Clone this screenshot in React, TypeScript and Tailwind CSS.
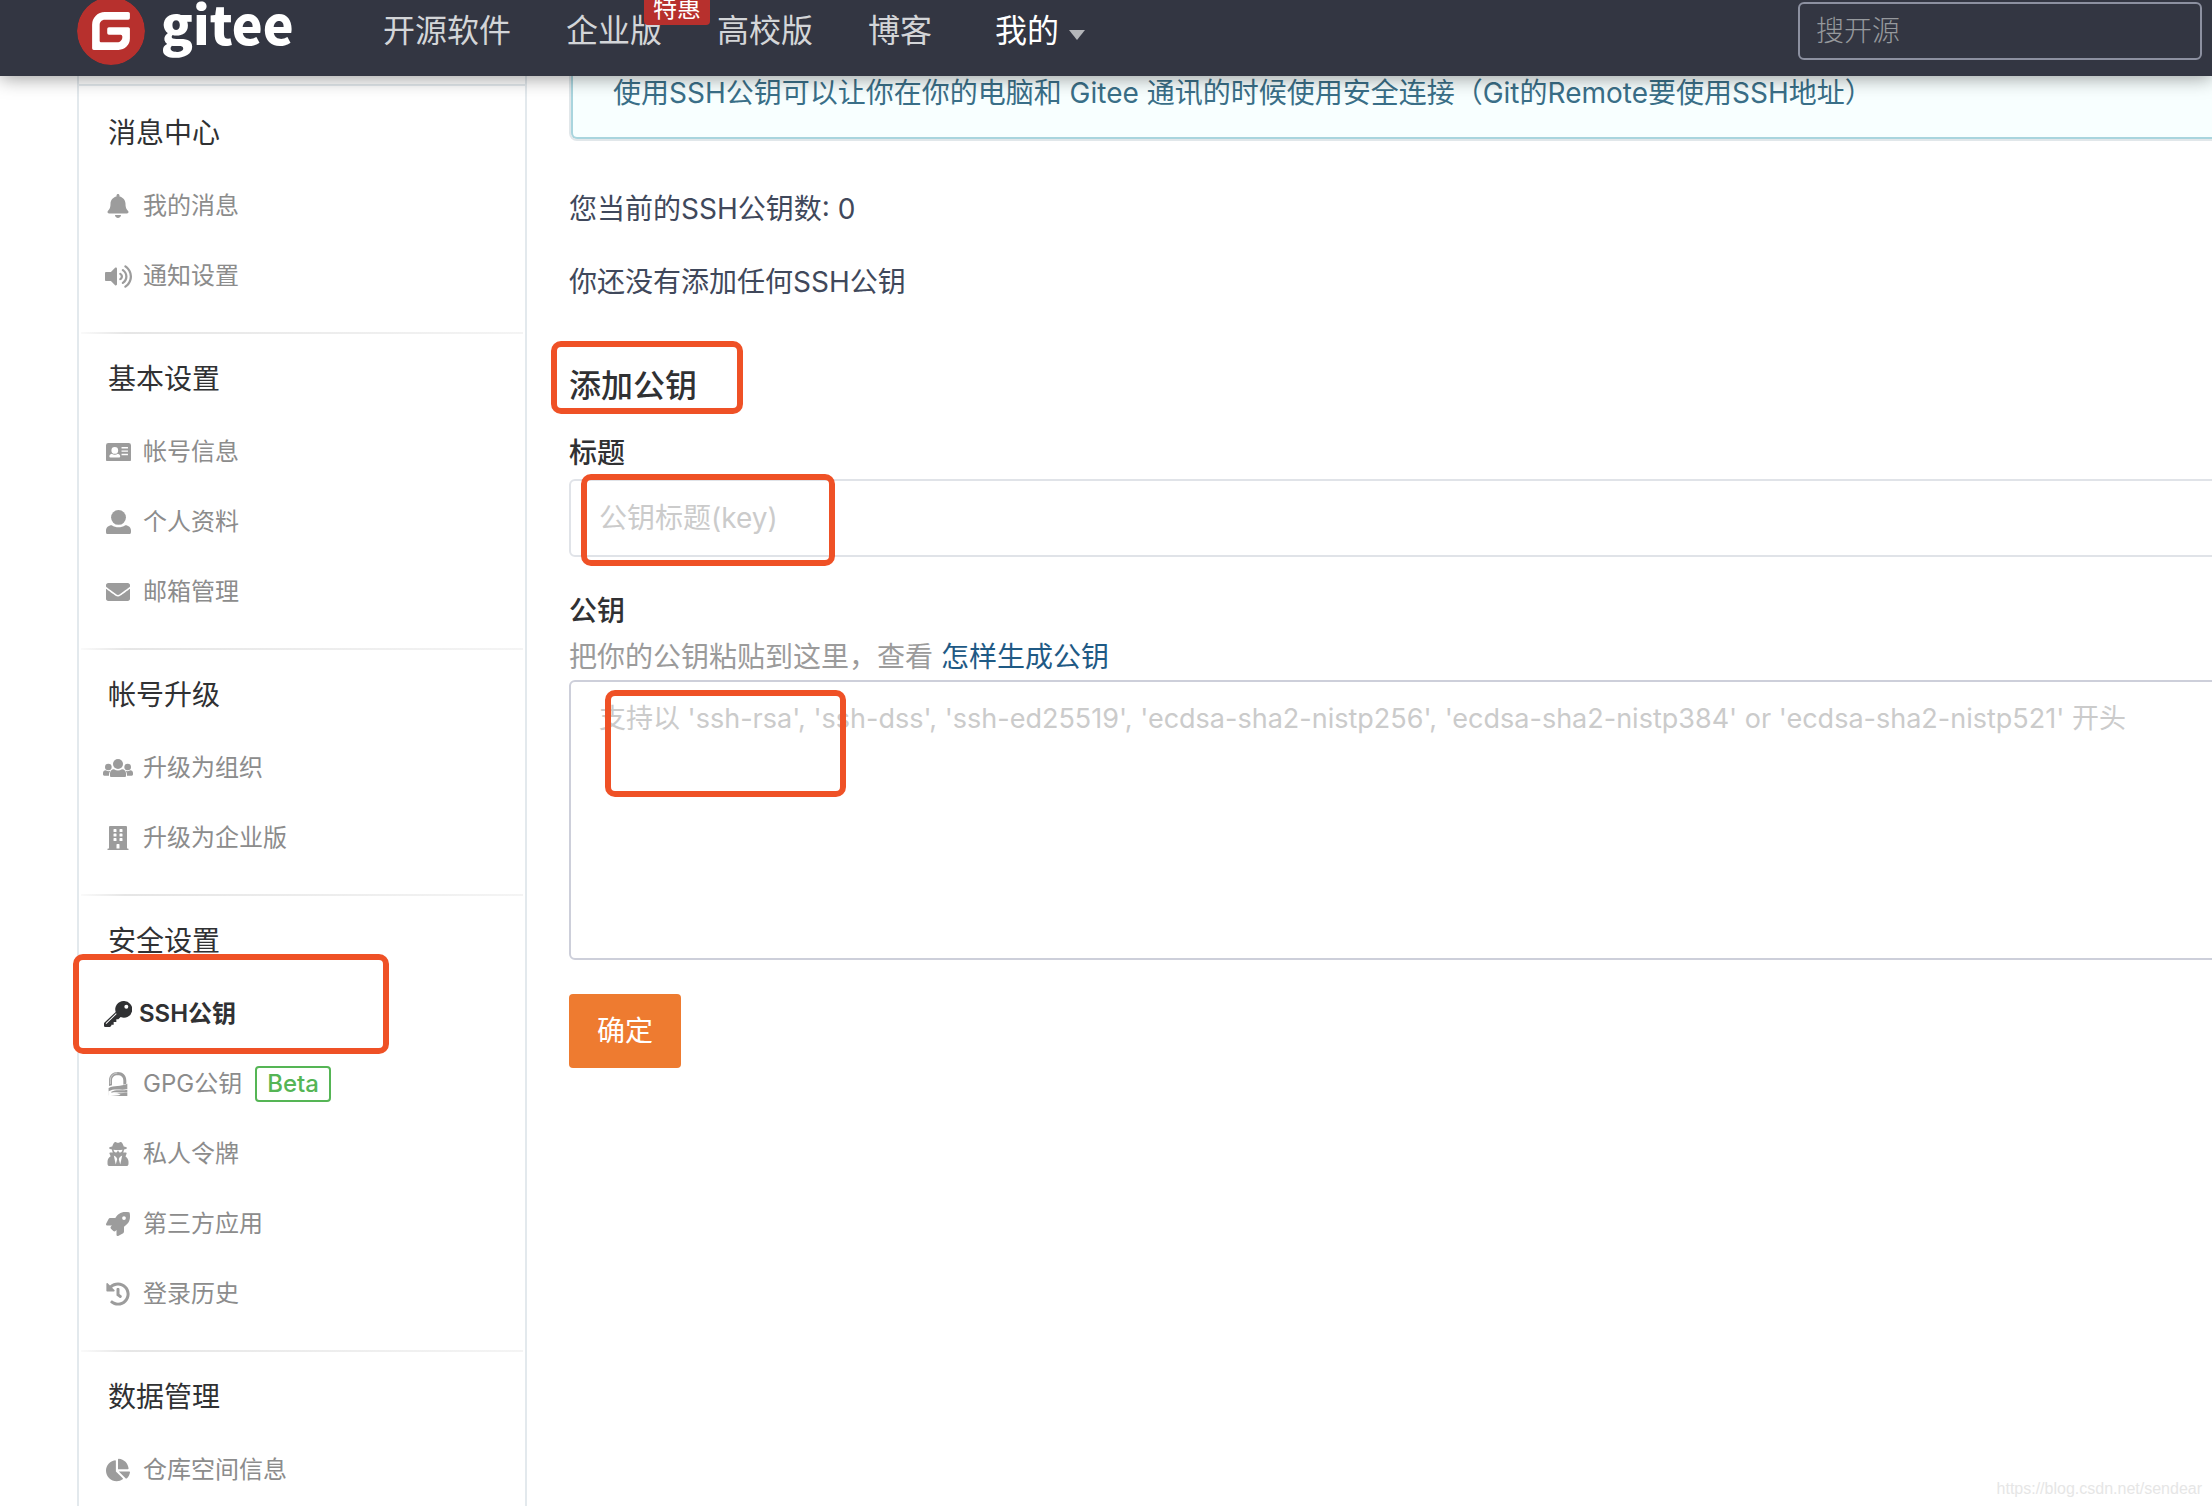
import { useState } from 'react';
import type { ReactNode } from 'react';
import {
  FaBell,
  FaBuilding,
  FaChartPie,
  FaEnvelope,
  FaHistory,
  FaRocket,
  FaUserSecret,
  FaVolumeUp,
} from 'react-icons/fa';
import { SiGitee } from 'react-icons/si';

interface MenuItem {
  label: string;
  icon: ReactNode;
  active?: boolean;
  beta?: boolean;
}

interface MenuGroup {
  title: string;
  items: MenuItem[];
}

function IdCardIcon() {
  return (
    <svg viewBox="0 0 74 56" className="w-[25px]" fill="currentColor">
      <path
        fillRule="evenodd"
        d="M7 0h60a7 7 0 0 1 7 7v42a7 7 0 0 1-7 7H7a7 7 0 0 1-7-7V7a7 7 0 0 1 7-7zM26 12a10 10 0 1 0 0 20a10 10 0 1 0 0-20zM17 32c-5 1-7 4-7 8c0 2 1 3 3 3h26c2 0 3-1 3-3c0-4-2-7-7-8c-5 4-13 4-18 0zM46 12v4h19v-4zM46 22v4h19v-4zM46 32v4h19v-4z"
      />
    </svg>
  );
}

function UserIcon() {
  return (
    <svg viewBox="0 0 74 72" className="w-[25px]" fill="currentColor">
      <circle cx="37" cy="22" r="22" />
      <path d="M17 45c12 8 28 8 40 0c10 0 17 7 17 16v5c0 4-3 6-6 6H6c-4 0-6-2-6-6v-5c0-9 7-16 17-16z" />
    </svg>
  );
}

function UsersIcon() {
  return (
    <svg viewBox="0 0 90 54" className="w-[30px] shrink-0" fill="currentColor">
      <circle cx="45" cy="15" r="15" />
      <circle cx="16" cy="24" r="10" />
      <circle cx="74" cy="24" r="10" />
      <path d="M33 31c8 5 16 5 24 0c7 0 12 5 12 12v7c0 3-2 4-4 4H25c-2 0-4-1-4-4v-7c0-7 5-12 12-12z" />
      <path d="M8 34c4 3 10 3 14 1c-3 4-4 9-4 15H4c-3 0-4-2-4-4v-4c0-4 3-8 8-8zM82 34c-4 3-10 3-14 1c3 4 4 9 4 15h14c3 0 4-2 4-4v-4c0-4-3-8-8-8z" />
    </svg>
  );
}

function KeyIcon() {
  return (
    <svg viewBox="0 0 84 78" className="w-7" fill="currentColor">
      <path
        fillRule="evenodd"
        d="M59 0a25 25 0 1 1-9 48l-7 7h-6v8h-8v8h-7v3l-4 4H4c-2 0-4-2-4-4v-8l35-33A25 25 0 0 1 59 0zM67 11a6 6 0 1 0 0 12a6 6 0 1 0 0-12zM36 37L5 67l2 2l31-30z"
      />
    </svg>
  );
}

// Padlock whose body is cut by slanted light stripes
function LockIcon() {
  return (
    <svg viewBox="0 0 60 72" className="h-6" fill="currentColor">
      <path d="M3 42V26C3 10 14 0 29 0s26 10 26 26v9l-9 3V26c0-10-6-16-17-16s-17 6-17 16v14z" />
      <path d="M7 36V25C7 12 16 4 28 3" fill="none" stroke="white" strokeWidth="1.5" />
      <path d="M2 48c16-10 36-3 56-13v16c-17 6-38-4-56 7z" />
      <path d="M10 59c16-8 32-1 48-6v7c-15 4-30-2-48 2z" />
      <path d="M20 63c14 1 26 1 38-2v11H8c12-1 22-2 30-4c-6-3-12-4-18-5z" />
      <path d="M2 48v22" fill="none" stroke="currentColor" strokeWidth="1" opacity="0.4" />
    </svg>
  );
}

const menuGroups: MenuGroup[] = [
  {
    title: '消息中心',
    items: [
      { label: '我的消息', icon: <FaBell /> },
      { label: '通知设置', icon: <FaVolumeUp className="size-[27px]" /> },
    ],
  },
  {
    title: '基本设置',
    items: [
      { label: '帐号信息', icon: <IdCardIcon /> },
      { label: '个人资料', icon: <UserIcon /> },
      { label: '邮箱管理', icon: <FaEnvelope /> },
    ],
  },
  {
    title: '帐号升级',
    items: [
      { label: '升级为组织', icon: <UsersIcon /> },
      { label: '升级为企业版', icon: <FaBuilding /> },
    ],
  },
  {
    title: '安全设置',
    items: [
      { label: 'SSH公钥', icon: <KeyIcon />, active: true },
      { label: 'GPG公钥', icon: <LockIcon />, beta: true },
      { label: '私人令牌', icon: <FaUserSecret /> },
      { label: '第三方应用', icon: <FaRocket /> },
      { label: '登录历史', icon: <FaHistory /> },
    ],
  },
  {
    title: '数据管理',
    items: [{ label: '仓库空间信息', icon: <FaChartPie /> }],
  },
];

// Hand-drawn style frame that points at a part of the page
function Highlight({ className }: { className: string }) {
  return (
    <span
      aria-hidden="true"
      className={`pointer-events-none absolute z-10 rounded-[10px] border-6 border-[#ef5126] ${className}`}
    />
  );
}

function Header() {
  return (
    <header className="relative z-20 flex h-[76px] items-center bg-[#333642] pr-2.5 pb-3.5 pl-[77px] shadow-[0_2px_18px_rgba(0,0,0,0.4)]">
      <a href="#" className="flex w-[306px] shrink-0 items-center gap-4 text-white">
        <SiGitee className="size-[68px] rounded-full bg-[radial-gradient(white_60%,transparent_61%)] text-[#b7302d]" />
        <span className="pb-4 font-['Noto_Sans_CJK_SC',sans-serif] text-[52px] leading-[60px] font-black">gitee</span>
      </a>

      <nav className="flex flex-1 items-center gap-[55px] text-[32px] leading-[44px] whitespace-nowrap text-[#d3d5d8]">
        <a href="#">开源软件</a>
        <a href="#" className="relative">
          企业版
          <span className="absolute right-[-48px] bottom-7 rounded-sm bg-[#b7302d] px-[9px] pt-1 text-[24px] leading-8 text-white">
            特惠
          </span>
        </a>
        <a href="#">高校版</a>
        <a href="#">博客</a>
        <button type="button" className="flex items-center gap-2.5 px-2 text-white">
          我的
          <svg viewBox="0 0 16 10" className="mt-2 w-4" fill="#b4b6ba">
            <path d="M0 0h16L8 10z" />
          </svg>
        </button>
      </nav>

      <input
        type="search"
        aria-label="搜开源"
        placeholder="搜开源"
        className="h-[58px] w-[404px] rounded-md border-2 border-[#8c90a0] bg-transparent px-4 text-[28px] font-light text-white placeholder:text-[#96999d]"
      />
    </header>
  );
}

function Sidebar() {
  return (
    <aside className="w-[450px] shrink-0 border-x-2 border-[#e3e9ed] pt-2">
      <div className="border-t-2 border-[#e3e9ed]">
        {menuGroups.map((group, index) => (
          <section key={group.title} className="pb-[21px] last:pb-0">
            <div
              className={`mx-0.5 h-0.5 ${
                index > 0 ? 'bg-linear-to-r from-[#fafafa] via-[#e6e6e6] via-10% to-[#f4f4f4]' : ''
              }`}
            />
            <h2 className="mb-[18px] pt-[25px] pl-[29px] text-[28px] leading-10 text-[#303133]">{group.title}</h2>
            <ul>
              {group.items.map((item) => (
                <li key={item.label} className="relative">
                  <a
                    href="#"
                    className={`flex h-[70px] items-center pl-[25px] text-[24px] ${
                      item.active ? 'gap-[7px] font-semibold text-[#303133]' : 'gap-[11px] text-[#8c8c8c]'
                    }`}
                  >
                    <span
                      className={`flex w-7 shrink-0 justify-center ${
                        item.active ? 'text-[#303133]' : 'text-[#9c9c9c]'
                      }`}
                    >
                      {item.icon}
                    </span>
                    {item.label}
                    {item.beta && (
                      <span className="ml-0.5 rounded-sm border-2 border-[#55b555] px-2.5 text-[24px] leading-8 font-medium text-[#55b555]">
                        Beta
                      </span>
                    )}
                  </a>
                  {item.active && <Highlight className="top-[-25px] -left-1.5 h-[100px] w-[316px]" />}
                </li>
              ))}
            </ul>
          </section>
        ))}
      </div>
    </aside>
  );
}

function SshKeyForm() {
  const [title, setTitle] = useState('');
  const [publicKey, setPublicKey] = useState('');

  return (
    <form className="flex flex-col items-start" onSubmit={(e) => e.preventDefault()}>
      <h3 className="relative mt-16 text-[32px] leading-10 font-medium text-[#303133]">
        添加公钥
        <Highlight className="top-[-25px] left-[-18px] h-[73px] w-[192px]" />
      </h3>

      <label htmlFor="key-title" className="mt-[29px] text-[28px] leading-9 font-medium text-[#303133]">
        标题
      </label>
      <div className="relative mt-2 w-full">
        <input
          id="key-title"
          type="text"
          value={title}
          onChange={(e) => setTitle(e.target.value)}
          placeholder="公钥标题(key)"
          className="block h-[78px] w-full rounded-md border-2 border-[#e0e3e8] px-7 text-[28px] placeholder:text-[#cbcbcb]"
        />
        <Highlight className="top-[-5px] left-3 h-[92px] w-[254px]" />
      </div>

      <label htmlFor="public-key" className="mt-9 text-[28px] leading-9 font-medium text-[#303133]">
        公钥
      </label>
      <p className="mt-2.5 text-[28px] leading-9 text-[#9b9b9b]">
        把你的公钥粘贴到这里，查看{' '}
        <a href="#" className="text-[#1f5a85]">
          怎样生成公钥
        </a>
      </p>
      <div className="relative mt-[5px] w-full">
        <textarea
          id="public-key"
          value={publicKey}
          onChange={(e) => setPublicKey(e.target.value)}
          placeholder="支持以 'ssh-rsa', 'ssh-dss', 'ssh-ed25519', 'ecdsa-sha2-nistp256', 'ecdsa-sha2-nistp384' or 'ecdsa-sha2-nistp521' 开头"
          className="block h-[280px] w-full resize-none rounded-md border-2 border-[#cdcfda] px-7 py-[17px] text-[27px] leading-10 placeholder:text-[#cbcbcb]"
        />
        <Highlight className="top-2.5 left-9 h-[107px] w-[241px]" />
      </div>

      <button type="submit" className="mt-[34px] h-[74px] rounded-sm bg-[#ee7b30] px-7 text-[28px] text-white">
        确定
      </button>
    </form>
  );
}

export default function App() {
  return (
    <div className="relative flex min-h-screen flex-col overflow-hidden bg-white font-['Inter','Noto_Sans_CJK_SC',sans-serif]">
      <Header />

      <div className="flex flex-1 pl-[77px]">
        <Sidebar />

        {/* The column runs on past the right edge of the window */}
        <main className="-mr-6 ml-[42px] flex-1">
          <div className="rounded-b-lg border-x-2 border-b-2 border-[#e1e7ea] bg-[#f8ffff] px-[42px] pb-7 text-[28px] leading-[35px] text-[#3a6f88] shadow-[inset_0_-2px_0_#a9d5de,inset_2px_0_0_#a9d5de]">
            使用SSH公钥可以让你在你的电脑和 Gitee 通讯的时候使用安全连接（Git的Remote要使用SSH地址）
          </div>

          <p className="mt-12 text-[28px] leading-10 text-[#40485b]">您当前的SSH公钥数: 0</p>
          <p className="mt-[33px] text-[28px] leading-10 text-[#40485b]">你还没有添加任何SSH公钥</p>

          <SshKeyForm />
        </main>
      </div>

      <span className="absolute right-2.5 bottom-[5px] font-['Liberation_Sans',sans-serif] text-[16px] leading-6 text-[#e6e6e6]">
        https://blog.csdn.net/sendear
      </span>
    </div>
  );
}
